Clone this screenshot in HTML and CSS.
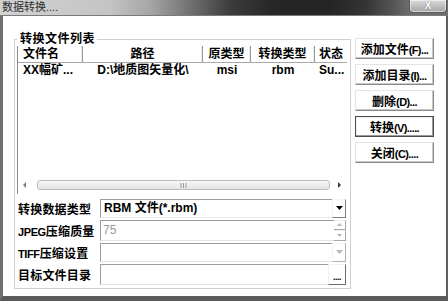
FILE: index.html
```html
<!DOCTYPE html>
<html lang="zh-CN">
<head>
<meta charset="utf-8">
<title>数据转换....</title>
<link rel="stylesheet" href="styles.css">
</head>
<body>
<div class="window">
  <div class="titlebar">
    <span class="title">数据转换....</span>
    <span class="close">X</span>
  </div>
  <div class="frame">
    <fieldset class="group">
      <legend class="legend">转换文件列表</legend>
      <div class="list">
        <div class="thead">
          <div class="th first">文件名</div>
          <div class="th">路径</div>
          <div class="th">原类型</div>
          <div class="th">转换类型</div>
          <div class="th last">状态</div>
        </div>
        <div class="trow">
          <div class="td first">XX幅矿...</div>
          <div class="td">D:\地质图矢量化\</div>
          <div class="td">msi</div>
          <div class="td">rbm</div>
          <div class="td left">Su...</div>
        </div>
        <div class="listfill"></div>
        <div class="hscroll">
          <svg class="arrow" width="4" height="6" viewBox="0 0 4 6"><polygon points="3,0 3,6 0,3" fill="#7a7a7a"/></svg>
          <div class="thumb">
            <svg width="7" height="5" viewBox="0 0 7 5"><path d="M1 0v5M3.5 0v5M6 0v5" stroke="#9a9a9a" stroke-width="1"/></svg>
          </div>
          <svg class="arrow" width="4" height="6" viewBox="0 0 4 6"><polygon points="0,0 0,6 3,3" fill="#3a3a3a"/></svg>
        </div>
      </div>
      <div class="form">
        <div class="row">
          <span class="label">转换数据类型</span>
          <div class="combo">
            <span class="value">RBM 文件(*.rbm)</span>
            <span class="dropbtn"><svg width="7" height="4" viewBox="0 0 7 4"><polygon points="0,0 7,0 3.5,4" fill="#000"/></svg></span>
          </div>
        </div>
        <div class="row">
          <span class="label"><span class="lat">JPEG</span>压缩质量</span>
          <div class="spin">
            <span class="value disabled">75</span>
            <span class="spinbtns">
              <span class="spinbtn"><svg width="5" height="3" viewBox="0 0 5 3"><polygon points="0,3 5,3 2.5,0" fill="#b4b4b4"/></svg></span>
              <span class="spinbtn"><svg width="5" height="3" viewBox="0 0 5 3"><polygon points="0,0 5,0 2.5,3" fill="#b4b4b4"/></svg></span>
            </span>
          </div>
        </div>
        <div class="row">
          <span class="label"><span class="lat">TIFF</span>压缩设置</span>
          <div class="combo off">
            <span class="value"></span>
            <span class="dropbtn"><svg width="7" height="4" viewBox="0 0 7 4"><polygon points="0,0 7,0 3.5,4" fill="#b8b8b8"/></svg></span>
          </div>
        </div>
        <div class="row">
          <span class="label">目标文件目录</span>
          <div class="dir">
            <span class="value"></span>
            <span class="browse">....</span>
          </div>
        </div>
      </div>
    </fieldset>
    <div class="buttons">
      <button class="btn">添加文件<span class="acc">(F)...</span></button>
      <button class="btn">添加目录<span class="acc">(I)...</span></button>
      <button class="btn">删除<span class="acc">(D)...</span></button>
      <button class="btn focus">转换<span class="acc">(V).....</span></button>
      <button class="btn">关闭<span class="acc">(C)....</span></button>
    </div>
  </div>
</div>
</body>
</html>
```
FILE: styles.css
```css
* { box-sizing: border-box; }

body {
  margin: 0;
  font-family: "Liberation Sans", "Noto Sans CJK SC", sans-serif;
  font-size: 12px;
  color: #000;
  background: #fff;
}

.window {
  width: 448px;
  height: 301px;
  display: flex;
  flex-direction: column;
  overflow: hidden;
  background: #fff;
}

.titlebar {
  height: 16px;
  flex: none;
  display: flex;
  justify-content: space-between;
  align-items: flex-start;
  border-bottom: 1px solid #7a7a7a;
  background: linear-gradient(90deg, #d2d2d2 0px, #c4c4c4 110px, #a6a6a6 150px, #6a6a6a 195px, #3c3c3c 230px, #262626 275px, #252525 330px, #343434 365px, #585858 395px, #6e6e6e 410px);
}

.title {
  font-size: 11px;
  line-height: 13px;
  color: #2e2e2e;
  padding: 1px 0 0 2px;
}

.close {
  width: 38px;
  height: 13px;
  margin-right: 1px;
  border: 1px solid #5c5c5c;
  border-top: none;
  border-radius: 0 0 4px 4px;
  background: linear-gradient(#dcdcdc, #a4a4a4);
  box-shadow: inset 0 0 0 1px rgba(255,255,255,0.5);
  color: #fff;
  font: bold 10px/12px "Liberation Sans", sans-serif;
  text-align: center;
  text-shadow: 0 0 1px #555;
}

.frame {
  flex: 1;
  display: flex;
  gap: 4px;
  border-left: 3px solid #717171;
  border-right: 2px solid #5e5e5e;
  border-bottom: 5px solid #5a5a5a;
  padding: 16px 12px 7px 11px;
  background: #fff;
}

.group {
  margin: 0;
  width: 337px;
  min-width: 0;
  padding: 0 3px 2px 2px;
  border: 1px solid #d0d0d0;
  display: flex;
  flex-direction: column;
}

.legend {
  margin: 0;
  padding: 0 2px 0 3px;
  font-weight: bold;
  line-height: 14px;
  letter-spacing: 0.5px;
}

.list {
  height: 148px;
  flex: none;
  border-left: 1px solid #8c8c8c;
  display: flex;
  flex-direction: column;
}

.thead, .trow {
  display: grid;
  grid-template-columns: 65px 120px 48px 64px 1fr;
}

.thead {
  height: 17px;
  border-bottom: 1px solid #a8a8a8;
}

.th {
  font-weight: bold;
  text-align: center;
  line-height: 16px;
  border-right: 1px solid #9a9a9a;
  box-shadow: inset -1px 0 0 #e8e8e8;
  white-space: nowrap;
  overflow: hidden;
}

.th.first, .td.first { text-align: left; padding-left: 5px; }
.th.last { border-right: none; box-shadow: none; }

.trow {
  height: 15px;
}

.td {
  font-weight: bold;
  text-align: center;
  line-height: 15px;
  white-space: nowrap;
  overflow: hidden;
}

.td.left { text-align: left; padding-left: 4px; }

.listfill { flex: 1; }

.hscroll {
  height: 12px;
  margin-bottom: 3px;
  display: flex;
  align-items: center;
  padding: 0 5px 0 5px;
}

.arrow { flex: none; }

.thumb {
  margin: 0 8px 0 10px;
  flex: 1;
  height: 10px;
  border: 1px solid #bdbdbd;
  border-radius: 3px;
  background: linear-gradient(#f7f7f7, #e4e4e4);
  display: flex;
  align-items: center;
  justify-content: center;
}

.form {
  display: flex;
  flex-direction: column;
  margin-top: 3px;
}

.row {
  height: 22px;
  display: flex;
  align-items: center;
}

.label {
  width: 83px;
  flex: none;
  padding-left: 1px;
  font-weight: bold;
  white-space: nowrap;
  letter-spacing: 0.2px;
  overflow: hidden;
}

.lat {
  font-size: 11px;
  letter-spacing: -0.4px;
}

.combo, .spin, .dir {
  width: 246px;
  display: flex;
  align-items: stretch;
}

.combo { height: 19px; }
.spin { height: 21px; }
.dir { height: 21px; }

.value {
  flex: 1;
  border-top: 1px solid #9c9c9c;
  border-left: 1px solid #9c9c9c;
  border-bottom: 1px solid #e4e4e4;
  padding-left: 3px;
  line-height: 16px;
  font-weight: bold;
  white-space: nowrap;
}

.value.disabled {
  color: #9a9a9a;
  font-weight: normal;
  line-height: 18px;
  padding-left: 2px;
}

.dropbtn {
  width: 14px;
  flex: none;
  border-top: 1px solid #f4f4f4;
  border-left: 1px solid #f4f4f4;
  border-right: 1px solid #7e7e7e;
  border-bottom: 1px solid #7e7e7e;
  display: flex;
  align-items: center;
  justify-content: center;
}

.combo.off .dropbtn {
  border-right-color: #b0b0b0;
  border-bottom-color: #b0b0b0;
}

.spinbtns {
  width: 12px;
  flex: none;
  display: flex;
  flex-direction: column;
}

.spinbtn {
  flex: 1;
  border-right: 1px solid #a8a8a8;
  border-bottom: 1px solid #a8a8a8;
  border-top: 1px solid #f0f0f0;
  display: flex;
  align-items: center;
  justify-content: center;
}

.browse {
  width: 18px;
  flex: none;
  border-top: 1px solid #f0f0f0;
  border-left: 1px solid #f0f0f0;
  border-right: 1px solid #6e6e6e;
  border-bottom: 1px solid #6e6e6e;
  font-weight: bold;
  font-size: 9px;
  line-height: 24px;
  text-align: center;
  letter-spacing: -0.5px;
}

.buttons {
  width: 79px;
  flex: none;
  display: flex;
  flex-direction: column;
  gap: 5px;
  padding-top: 6px;
}

.btn {
  height: 21px;
  width: 79px;
  padding: 0;
  margin: 0;
  background: #fff;
  border: 1px solid;
  border-color: #e4e4e4 #8a8a8a #8a8a8a #e4e4e4;
  box-shadow: inset -1px -1px 0 #c8c8c8;
  font-family: "Liberation Sans", "Noto Sans CJK SC", sans-serif;
  font-size: 12px;
  font-weight: bold;
  color: #000;
  white-space: nowrap;
}

.btn.focus {
  border: 1px solid #4a4a4a;
  box-shadow: inset -1px -1px 0 #9a9a9a, inset 1px 1px 0 #f0f0f0;
}

.acc {
  font-size: 11px;
  letter-spacing: -0.6px;
}
```
